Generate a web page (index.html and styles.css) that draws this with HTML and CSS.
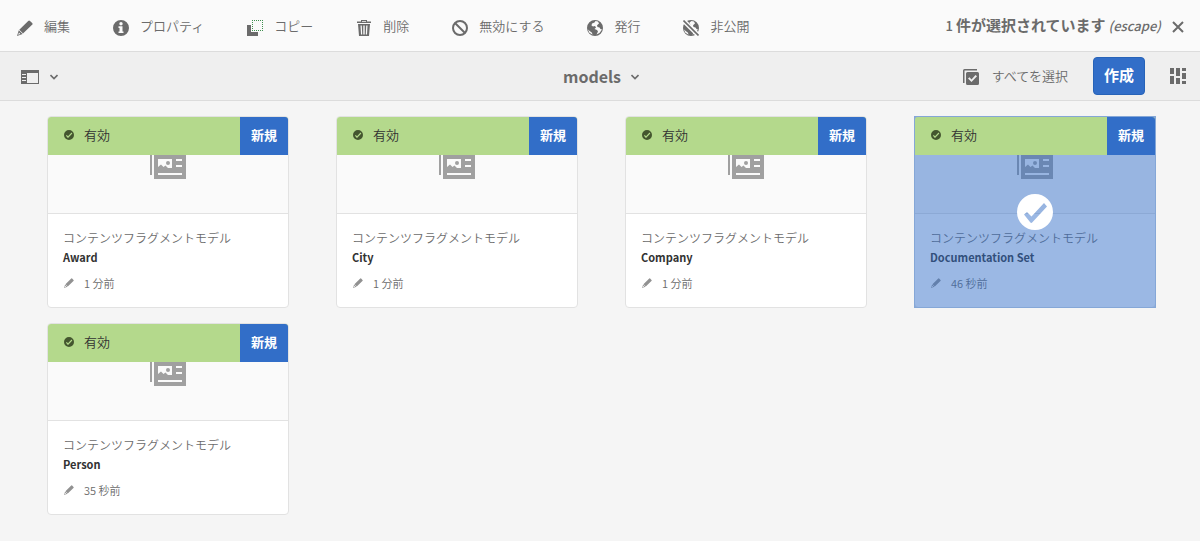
FILE: index.html
```html
<!DOCTYPE html>
<html lang="ja">
<head>
<meta charset="utf-8">
<title>models</title>
<link rel="stylesheet" href="styles.css">
</head>
<body>
<svg class="sprite" aria-hidden="true">
  <symbol id="i-edit" viewBox="0 0 16 16"><path d="M11.2 1a1.200 1.200 0 0 1 1.800-.1l2.200 2.200a1.200 1.200 0 0 1-.1 1.700L6 13.500 2.300 9.800z"/><path fill-rule="evenodd" d="M1.800 10.300 5.600 14 0 16zM2 12.500l-.9 2.300 2.300-.9z"/></symbol>
  <symbol id="i-info" viewBox="0 0 16 16"><path fill-rule="evenodd" d="M8 0a8 8 0 1 1 0 16A8 8 0 0 1 8 0zm0 2a1.700 1.700 0 1 0 0 3.400A1.700 1.700 0 0 0 8 2zM5.500 6.300V8h1v3.500h-1V13h5v-1.500h-1V6.300z"/></symbol>
  <symbol id="i-copy" viewBox="0 0 16 16"><path d="M0 5h4v7h7v4H0z"/><path d="M5 .5h11M5 10.500h11M5.500 2v8M15.500 2v8" fill="none" stroke="#3f8f50" stroke-dasharray="1 1"/></symbol>
  <symbol id="i-delete" viewBox="0 0 16 16"><path fill-rule="evenodd" d="M5 1.500V0h6v1.500h4V3H1V1.500zM6 1v.8h4V1zM2 4h12l-1 12H3zM4.500 5.500l.5 9h1.200l-.4-9zm2.800 0v9h1.400v-9zm2.900 0-.4 9H11l.5-9z"/></symbol>
  <symbol id="i-disable" viewBox="0 0 16 16"><g fill="none" stroke="currentColor" stroke-width="2"><circle cx="8" cy="8" r="7"/><path d="m3 3 10 10"/></g></symbol>
  <symbol id="i-globe" viewBox="0 0 16 16"><path fill-rule="evenodd" d="M8 0a8 8 0 1 1 0 16A8 8 0 0 1 8 0zM8.500 1 7.500 2.500 5 3.500 4.500 5.500 6 6.500 8 6l1 1.500L7.500 9l2.500 1 1 1.500-1.500 3 3-1.500 2.500-3.500L13.500 9l-1-1.500-2-.5-.5-1.800L12 3.500 11 1.600zM1 9.500l1.200 3 3.300 2.300-.5-2-2-1.500z"/></symbol>
  <symbol id="i-unpublish" viewBox="0 0 16 16"><path fill-rule="evenodd" d="M8 0a8 8 0 1 1 0 16A8 8 0 0 1 8 0zM8.500 1 6.500 2.500 8 6l1 1.500L7.500 9l2.500 1 .5 2.500-1 2.300 3-1.800 2.500-3.500L13.500 9l-1-1.500-2-.5-.5-1.800L12 3.500 11 1.600zM1 9.500l1.200 3 3.300 2.300-.5-2-2-1.500z"/><path d="m0 0 16 16" fill="none" stroke="#fafafa" stroke-width="4.500"/><path d="m.5.500 15 15" fill="none" stroke="currentColor" stroke-width="1.600"/></symbol>
  <symbol id="i-close" viewBox="0 0 12 12"><path d="m1 1 10 10M11 1 1 11" fill="none" stroke="currentColor" stroke-width="2"/></symbol>
  <symbol id="i-chevron" viewBox="0 0 8 6"><path d="m.5 1 3.500 3.500L7.500 1" fill="none" stroke="currentColor" stroke-width="1.600"/></symbol>
  <symbol id="i-rail" viewBox="0 0 18 14"><path fill-rule="evenodd" d="M0 0h18v14H0zM1 4h4v1H1zm0 3h4v1H1zm0 3h4v1H1zM6 3v10h11V3z"/></symbol>
  <symbol id="i-selectall" viewBox="0 0 16 16"><path d="M0 1.500Q0 0 1.500 0H14v1.500H1.500V14H0z"/><path fill-rule="evenodd" d="M4.500 3h10A1.500 1.500 0 0 1 16 4.500v10a1.500 1.500 0 0 1-1.500 1.500h-10A1.500 1.500 0 0 1 3 14.500v-10A1.500 1.500 0 0 1 4.500 3zM5 9.500 8.500 13 14 7.200 12.500 6l-4 4.400-2-2.200z"/></symbol>
  <symbol id="i-cards" viewBox="0 0 16 16"><path d="M0 0h4v6H0zM0 8h4v8H0zM6 0h4v8H6zM6 10h4v6H6zM12 0h4v3h-4zM12 5h4v6h-4zM12 13h4v3h-4z"/></symbol>
  <symbol id="i-check" viewBox="0 0 36 36"><path fill-rule="evenodd" d="M18 0a18 18 0 1 1 0 36 18 18 0 0 1 0-36zM7 20.500l6.200 7.800q1.100 1.300 2.200 0L30 12.500 27 9 14.500 22.500 10 18z"/></symbol>
  <symbol id="i-model" viewBox="0 0 36 28"><path d="M0 4h2v20H0z"/><path fill-rule="evenodd" d="M4 0h32v28H4zM8 8v8l3-2.500 2.500 2.500 2-1.500L18 17h4V8zm18 0v2h6V8zm0 6v2h6v-2zM8 22v2h24v-2z"/><circle cx="18" cy="12" r="2"/></symbol>
</svg>

<header class="actions">
  <nav class="action-list">
    <button class="action"><svg class="icon"><use href="#i-edit"/></svg>編集</button>
    <button class="action"><svg class="icon"><use href="#i-info"/></svg>プロパティ</button>
    <button class="action"><svg class="icon"><use href="#i-copy"/></svg>コピー</button>
    <button class="action"><svg class="icon"><use href="#i-delete"/></svg>削除</button>
    <button class="action"><svg class="icon"><use href="#i-disable"/></svg>無効にする</button>
    <button class="action"><svg class="icon"><use href="#i-globe"/></svg>発行</button>
    <button class="action"><svg class="icon"><use href="#i-unpublish"/></svg>非公開</button>
  </nav>
  <button class="deselect"><span class="selection"><span class="count">1</span><span>件が選択されています</span><em>(escape)</em></span><svg class="icon-close"><use href="#i-close"/></svg></button>
</header>

<div class="toolbar">
  <div class="toolbar-start">
    <button class="rail" aria-label="サイドパネル"><svg class="icon-rail"><use href="#i-rail"/></svg><svg class="icon-chevron"><use href="#i-chevron"/></svg></button>
  </div>
  <button class="crumb">models<svg class="icon-chevron"><use href="#i-chevron"/></svg></button>
  <div class="toolbar-end">
    <button class="action select-all"><svg class="icon"><use href="#i-selectall"/></svg>すべてを選択</button>
    <button class="create">作成</button>
    <button class="view" aria-label="カード表示"><svg class="icon"><use href="#i-cards"/></svg></button>
  </div>
</div>

<main class="grid">
  <article class="card">
    <div class="banner"><span class="status"><svg class="icon-status"><use href="#i-check"/></svg>有効</span><span class="new">新規</span></div>
    <div class="preview"><svg class="icon-model"><use href="#i-model"/></svg></div>
    <div class="info"><p class="type">コンテンツフラグメントモデル</p><h2 class="name">Award</h2><p class="meta"><svg class="icon-pen"><use href="#i-edit"/></svg>1 分前</p></div>
  </article>
  <article class="card">
    <div class="banner"><span class="status"><svg class="icon-status"><use href="#i-check"/></svg>有効</span><span class="new">新規</span></div>
    <div class="preview"><svg class="icon-model"><use href="#i-model"/></svg></div>
    <div class="info"><p class="type">コンテンツフラグメントモデル</p><h2 class="name">City</h2><p class="meta"><svg class="icon-pen"><use href="#i-edit"/></svg>1 分前</p></div>
  </article>
  <article class="card">
    <div class="banner"><span class="status"><svg class="icon-status"><use href="#i-check"/></svg>有効</span><span class="new">新規</span></div>
    <div class="preview"><svg class="icon-model"><use href="#i-model"/></svg></div>
    <div class="info"><p class="type">コンテンツフラグメントモデル</p><h2 class="name">Company</h2><p class="meta"><svg class="icon-pen"><use href="#i-edit"/></svg>1 分前</p></div>
  </article>
  <article class="card selected">
    <div class="banner"><span class="status"><svg class="icon-status"><use href="#i-check"/></svg>有効</span><span class="new">新規</span></div>
    <div class="preview"><svg class="icon-model"><use href="#i-model"/></svg></div>
    <div class="info"><p class="type">コンテンツフラグメントモデル</p><h2 class="name">Documentation Set</h2><p class="meta"><svg class="icon-pen"><use href="#i-edit"/></svg>46 秒前</p></div>
    <div class="overlay"><svg class="icon-selected"><use href="#i-check"/></svg></div>
  </article>
  <article class="card">
    <div class="banner"><span class="status"><svg class="icon-status"><use href="#i-check"/></svg>有効</span><span class="new">新規</span></div>
    <div class="preview"><svg class="icon-model"><use href="#i-model"/></svg></div>
    <div class="info"><p class="type">コンテンツフラグメントモデル</p><h2 class="name">Person</h2><p class="meta"><svg class="icon-pen"><use href="#i-edit"/></svg>35 秒前</p></div>
  </article>
</main>
</body>
</html>
```

FILE: styles.css
```css
* { box-sizing: border-box; }

body {
  margin: 0;
  background: #f5f5f5;
  color: #6b6b6b;
  font: 350 13px/20px "Noto Sans CJK JP", sans-serif;
}

svg { display: block; flex: none; fill: currentColor; }
.sprite { position: absolute; width: 0; height: 0; }
.icon { width: 16px; height: 16px; }
.icon-close { width: 12px; height: 12px; }
.icon-chevron { width: 8px; height: 6px; }
.icon-rail { width: 18px; height: 14px; }
.icon-model { width: 36px; height: 28px; }
.icon-status { width: 10px; height: 10px; }
.icon-pen { width: 10px; height: 10px; color: #919191; }
.icon-selected { width: 36px; height: 36px; }

button {
  display: flex;
  align-items: center;
  margin: 0;
  padding: 0;
  border: 0;
  background: none;
  color: inherit;
  font: inherit;
  white-space: nowrap;
  cursor: pointer;
}

.actions {
  display: flex;
  align-items: center;
  justify-content: space-between;
  height: 52px;
  padding: 2px 16px 0 17px;
  border-bottom: 1px solid #dcdcdc;
  background: #fafafa;
}
.action-list { display: flex; gap: 43px; }
.action { gap: 11px; padding-bottom: 2px; }
.action .icon { margin-top: 4px; }
.deselect { gap: 11px; padding-bottom: 2px; font-size: 15px; font-weight: 700; }
.selection { display: flex; align-items: baseline; gap: 3px; }
.count { font-size: 13px; font-weight: 500; }
.deselect em { font-size: 13px; font-weight: 500; }
.deselect .icon-close { margin-top: 2px; }

.toolbar {
  display: grid;
  grid-template-columns: 1fr auto 1fr;
  align-items: center;
  height: 49px;
  padding: 0 14px 0 16px;
  border-bottom: 1px solid #dcdcdc;
  background: #efefef;
}
.toolbar-start, .toolbar-end { display: flex; align-items: center; }
.toolbar-end { justify-content: flex-end; gap: 25px; }
.rail { gap: 11px; padding: 2px 5px 0; }
.crumb { gap: 10px; font-size: 16px; font-weight: 700; }
.crumb .icon-chevron { margin-top: 2px; }
.select-all { gap: 13px; padding-bottom: 0; }
.select-all .icon { margin-top: 2px; }
.create {
  height: 38px;
  padding: 0 10px 2px;
  border: 1px solid #2763b8;
  border-radius: 4px;
  background: #326ec8;
  color: #fff;
  font-size: 15px;
  font-weight: 700;
}

.grid {
  display: grid;
  grid-template-columns: repeat(4, 1fr);
  gap: 15px 47px;
  padding: 15px 44px 15px 47px;
}
.card {
  position: relative;
  border: 1px solid #e2e2e2;
  border-radius: 4px;
  background: #fff;
}
.banner {
  position: absolute;
  inset: 0 0 auto;
  z-index: 2;
  display: flex;
  height: 38px;
  overflow: hidden;
  border-radius: 3px 3px 0 0;
  background: #b4d98c;
  color: #323232;
}
.status { display: flex; flex: 1; align-items: center; gap: 10px; padding: 0 16px 2px; }
.icon-status { color: #44562f; }
.new {
  display: flex;
  align-items: center;
  padding: 0 11px 2px;
  background: #326ec8;
  color: #fff;
  font-weight: 700;
}
.preview {
  display: flex;
  align-items: center;
  justify-content: center;
  height: 97px;
  border-bottom: 1px solid #e2e2e2;
  border-radius: 4px 4px 0 0;
  background: #fafafa;
  color: #a0a0a0;
}
.info { padding: 14px 15px 15px; font-size: 12px; }
.info p, .info h2 { margin: 0; }
.name { color: #323232; font-size: 11px; line-height: 18px; font-weight: 700; }
.meta { display: flex; align-items: center; gap: 10px; padding: 8px 1px 0; font-size: 11px; line-height: 18px; }
.overlay {
  position: absolute;
  inset: -1px;
  display: flex;
  align-items: center;
  justify-content: center;
  border: 1px solid #85a7d7;
  background: rgb(50 110 200 / 49%);
  color: #fff;
}
```
